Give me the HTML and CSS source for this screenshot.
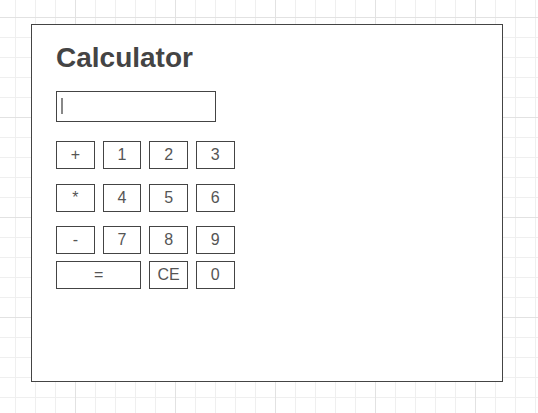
FILE: index.html
```html
<!DOCTYPE html>
<html>
<head>
<meta charset="utf-8">
<link rel="stylesheet" href="styles.css">
</head>
<body>
<div class="card">
  <h1 class="title">Calculator</h1>
  <div class="display-wrap"><input class="display" type="text"></div>
  <div class="row row-1">
    <button class="key">+</button><button class="key">1</button><button class="key">2</button><button class="key">3</button>
  </div>
  <div class="row row-2">
    <button class="key">*</button><button class="key">4</button><button class="key">5</button><button class="key">6</button>
  </div>
  <div class="row row-3">
    <button class="key">-</button><button class="key">7</button><button class="key">8</button><button class="key">9</button>
  </div>
  <div class="row row-4">
    <button class="key key-wide">=</button><button class="key">CE</button><button class="key">0</button>
  </div>
</div>
</body>
</html>
```
FILE: styles.css
```css
html, body {
  margin: 0;
  padding: 0;
}
body {
  width: 538px;
  height: 413px;
  overflow: hidden;
  background-color: #ffffff;
  background-image:
    linear-gradient(to right, #e2e2e2 1px, transparent 1px),
    linear-gradient(to bottom, #e2e2e2 1px, transparent 1px),
    linear-gradient(to right, #efefef 1px, transparent 1px),
    linear-gradient(to bottom, #efefef 1px, transparent 1px);
  background-size: 100px 100px, 100px 100px, 20px 20px, 20px 20px;
  background-position: 75px 0, 0 17px, 15px 0, 0 17px;
  font-family: "Liberation Sans", Arial, sans-serif;
  display: flow-root;
}
.card {
  box-sizing: border-box;
  width: 472px;
  height: 358px;
  margin: 24px 0 0 31px;
  padding: 17px 24px;
  border: 1px solid #444444;
  background: #ffffff;
}
.title {
  margin: 0;
  font-size: 28px;
  line-height: 32px;
  font-weight: bold;
  color: #444444;
}
.display-wrap {
  position: relative;
  width: 160px;
  height: 31px;
  margin-top: 17px;
}
.display-wrap::after {
  content: "";
  position: absolute;
  left: 5px;
  top: 7px;
  width: 2px;
  height: 16px;
  background: #888888;
}
.display {
  box-sizing: border-box;
  width: 160px;
  height: 31px;
  margin: 0;
  padding: 0 4px;
  border: 1px solid #444444;
  background: #ffffff;
  outline: none;
  font-family: "Liberation Sans", Arial, sans-serif;
  font-size: 16px;
}
.row {
  display: flex;
  gap: 8px;
}
.row-1 { margin-top: 19px; }
.row-2 { margin-top: 15px; }
.row-3 { margin-top: 14px; }
.row-4 { margin-top: 7px; }
.key {
  box-sizing: border-box;
  width: 38.67px;
  height: 28px;
  margin: 0;
  padding: 0;
  border: 1px solid #444444;
  border-radius: 0;
  background: #ffffff;
  color: #555555;
  font-family: "Liberation Sans", Arial, sans-serif;
  font-size: 16px;
  line-height: 26px;
  text-align: center;
}
.key-wide {
  width: 85.34px;
}
```
